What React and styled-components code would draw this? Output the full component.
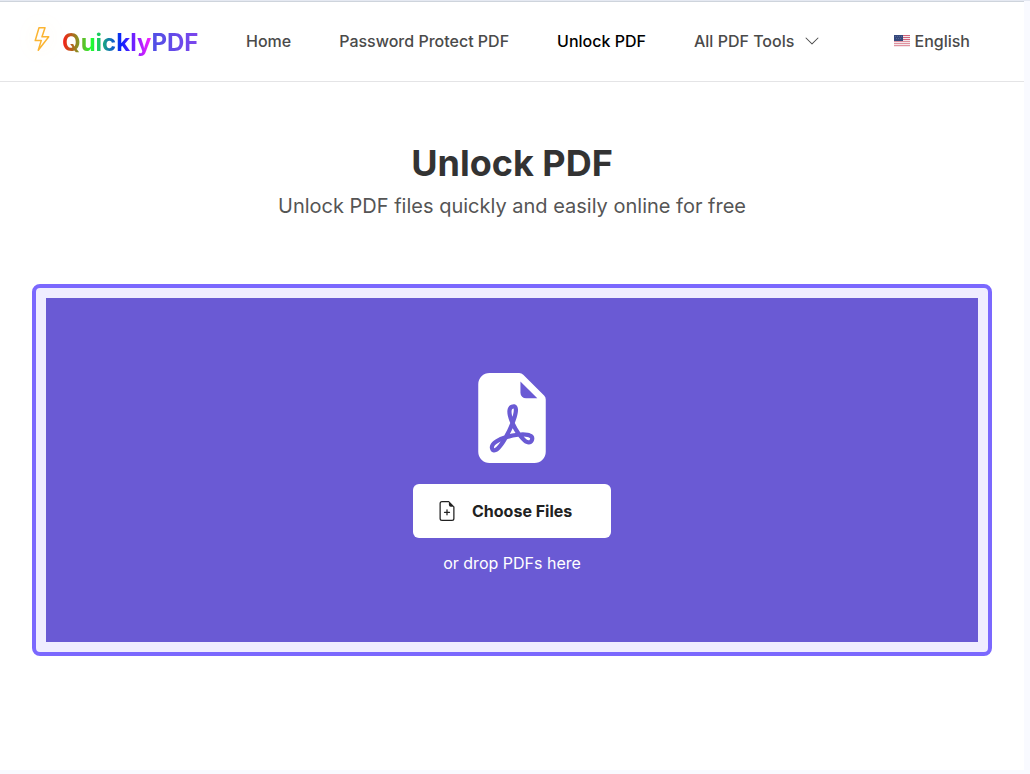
import React from "react";
import styled, { createGlobalStyle } from "styled-components";
import {
  BsChevronDown,
  BsFileEarmarkPdfFill,
  BsFileEarmarkPlus,
  BsLightning,
} from "react-icons/bs";

const GlobalStyle = createGlobalStyle`
  * {
    box-sizing: border-box;
  }

  body {
    margin: 0;
    background: #f9faff;
    color: #4a4a4a;
    font-family: Inter, "Open Sans", sans-serif;
    font-size: 16px;
    line-height: 24px;
  }
`;

const Frame = styled.div`
  display: flex;
  flex-direction: column;
  min-height: 100vh;
  padding: 0 6px 4px 0;
  border-top: 1px solid #e5e9f2;
`;

const Page = styled.div`
  flex: 1;
  background: #fff;
  border-top: 1px solid #ced4dc;
`;

const Header = styled.header`
  display: flex;
  align-items: center;
  height: 80px;
  padding: 0 54px 2px 30px;
  border-bottom: 1px solid #e4e4e6;
`;

const Brand = styled.a`
  display: flex;
  align-items: center;
  gap: 8px;
  width: 216px;
  padding-top: 4px;
  font-size: 24px;
  font-weight: 700;
  line-height: 36px;
  text-decoration: none;
`;

const Bolt = styled(BsLightning)`
  flex-shrink: 0;
  margin-bottom: 8px;
  color: #fbb431;
  filter: drop-shadow(0 0 10px rgba(251, 180, 49, 0.15));
`;

const BrandPart = styled.span`
  background: ${({ $gradient }) => $gradient};
  background-clip: text;
  color: transparent;
`;

const Nav = styled.nav`
  display: flex;
  align-items: center;
  gap: 48px;
`;

const NavLink = styled.a`
  color: ${({ $active }) => ($active ? "#000" : "#4a4a4a")};
  font-weight: 500;
  text-decoration: none;
  white-space: nowrap;
`;

const NavButton = styled.button`
  display: flex;
  align-items: center;
  gap: ${({ $gap }) => $gap}px;
  padding: 0;
  border: 0;
  background: none;
  color: #4a4a4a;
  font: inherit;
  font-weight: 500;
  white-space: nowrap;
`;

const Language = styled(NavButton)`
  margin-left: auto;
`;

const Main = styled.main`
  padding: 55px 32px 112px;
`;

const Title = styled.h1`
  margin: 0;
  color: #333;
  font-size: 36px;
  font-weight: 700;
  line-height: 52px;
  text-align: center;
`;

const Subtitle = styled.p`
  margin: 0 0 61px;
  color: #555;
  font-size: 20px;
  line-height: 34px;
  text-align: center;
`;

const DropZone = styled.section`
  padding: 10px;
  border: 4px solid #7b68fe;
  border-radius: 8px;
  background: #f0edff;
`;

const DropArea = styled.div`
  display: flex;
  flex-direction: column;
  align-items: center;
  padding: 75px 16px 66px;
  background: #6a5ad4;
  color: #fff;
`;

const ChooseButton = styled.button`
  display: flex;
  align-items: center;
  gap: 15px;
  width: 198px;
  height: 54px;
  margin: 21px 0 13px;
  padding: 0 24px;
  border: 0;
  border-radius: 6px;
  background: #fff;
  color: #212121;
  font: inherit;
  font-weight: 700;
  white-space: nowrap;
`;

const Hint = styled.p`
  margin: 0;
  line-height: 25px;
`;

const UsFlag = () => (
  <svg width="16" height="12" viewBox="0 0 16 12" aria-hidden="true">
    <rect width="16" height="12" fill="#f3e6ea" />
    {[0, 2, 4, 6, 8, 10].map(y => (
      <rect key={y} y={y} width="16" height="1" fill={y < 6 ? "#d0647a" : "#e0929f"} />
    ))}
    <rect width="9" height="6" fill="#34487c" />
    <path
      d="M1 1.5h1M3 1.5h1M5 1.5h1M7 1.5h1M2 3.5h1M4 3.5h1M6 3.5h1"
      stroke="#6b7ba5"
      strokeWidth="0.6"
    />
  </svg>
);

const App = () => (
  <>
    <GlobalStyle />
    <Frame>
      <Page>
        <Header>
          <Brand href="#">
            <Bolt size={24} />
            <span>
              <BrandPart $gradient="linear-gradient(to right, #ff1414, #20ff30, #0a20ff, #ff20ff)">
                Quickly
              </BrandPart>
              <BrandPart $gradient="linear-gradient(to right, #4f50e5, #7c45ed)">PDF</BrandPart>
            </span>
          </Brand>
          <Nav>
            <NavLink href="#">Home</NavLink>
            <NavLink href="#">Password Protect PDF</NavLink>
            <NavLink href="#" $active>
              Unlock PDF
            </NavLink>
            <NavButton type="button" $gap={10}>
              All PDF Tools
              <BsChevronDown size={16} />
            </NavButton>
          </Nav>
          <Language type="button" $gap={5}>
            <UsFlag />
            English
          </Language>
        </Header>
        <Main>
          <Title>Unlock PDF</Title>
          <Subtitle>Unlock PDF files quickly and easily online for free</Subtitle>
          <DropZone>
            <DropArea>
              <BsFileEarmarkPdfFill size={90} />
              <ChooseButton type="button">
                <BsFileEarmarkPlus size={20} />
                Choose Files
              </ChooseButton>
              <Hint>or drop PDFs here</Hint>
            </DropArea>
          </DropZone>
        </Main>
      </Page>
    </Frame>
  </>
);

export default App;
